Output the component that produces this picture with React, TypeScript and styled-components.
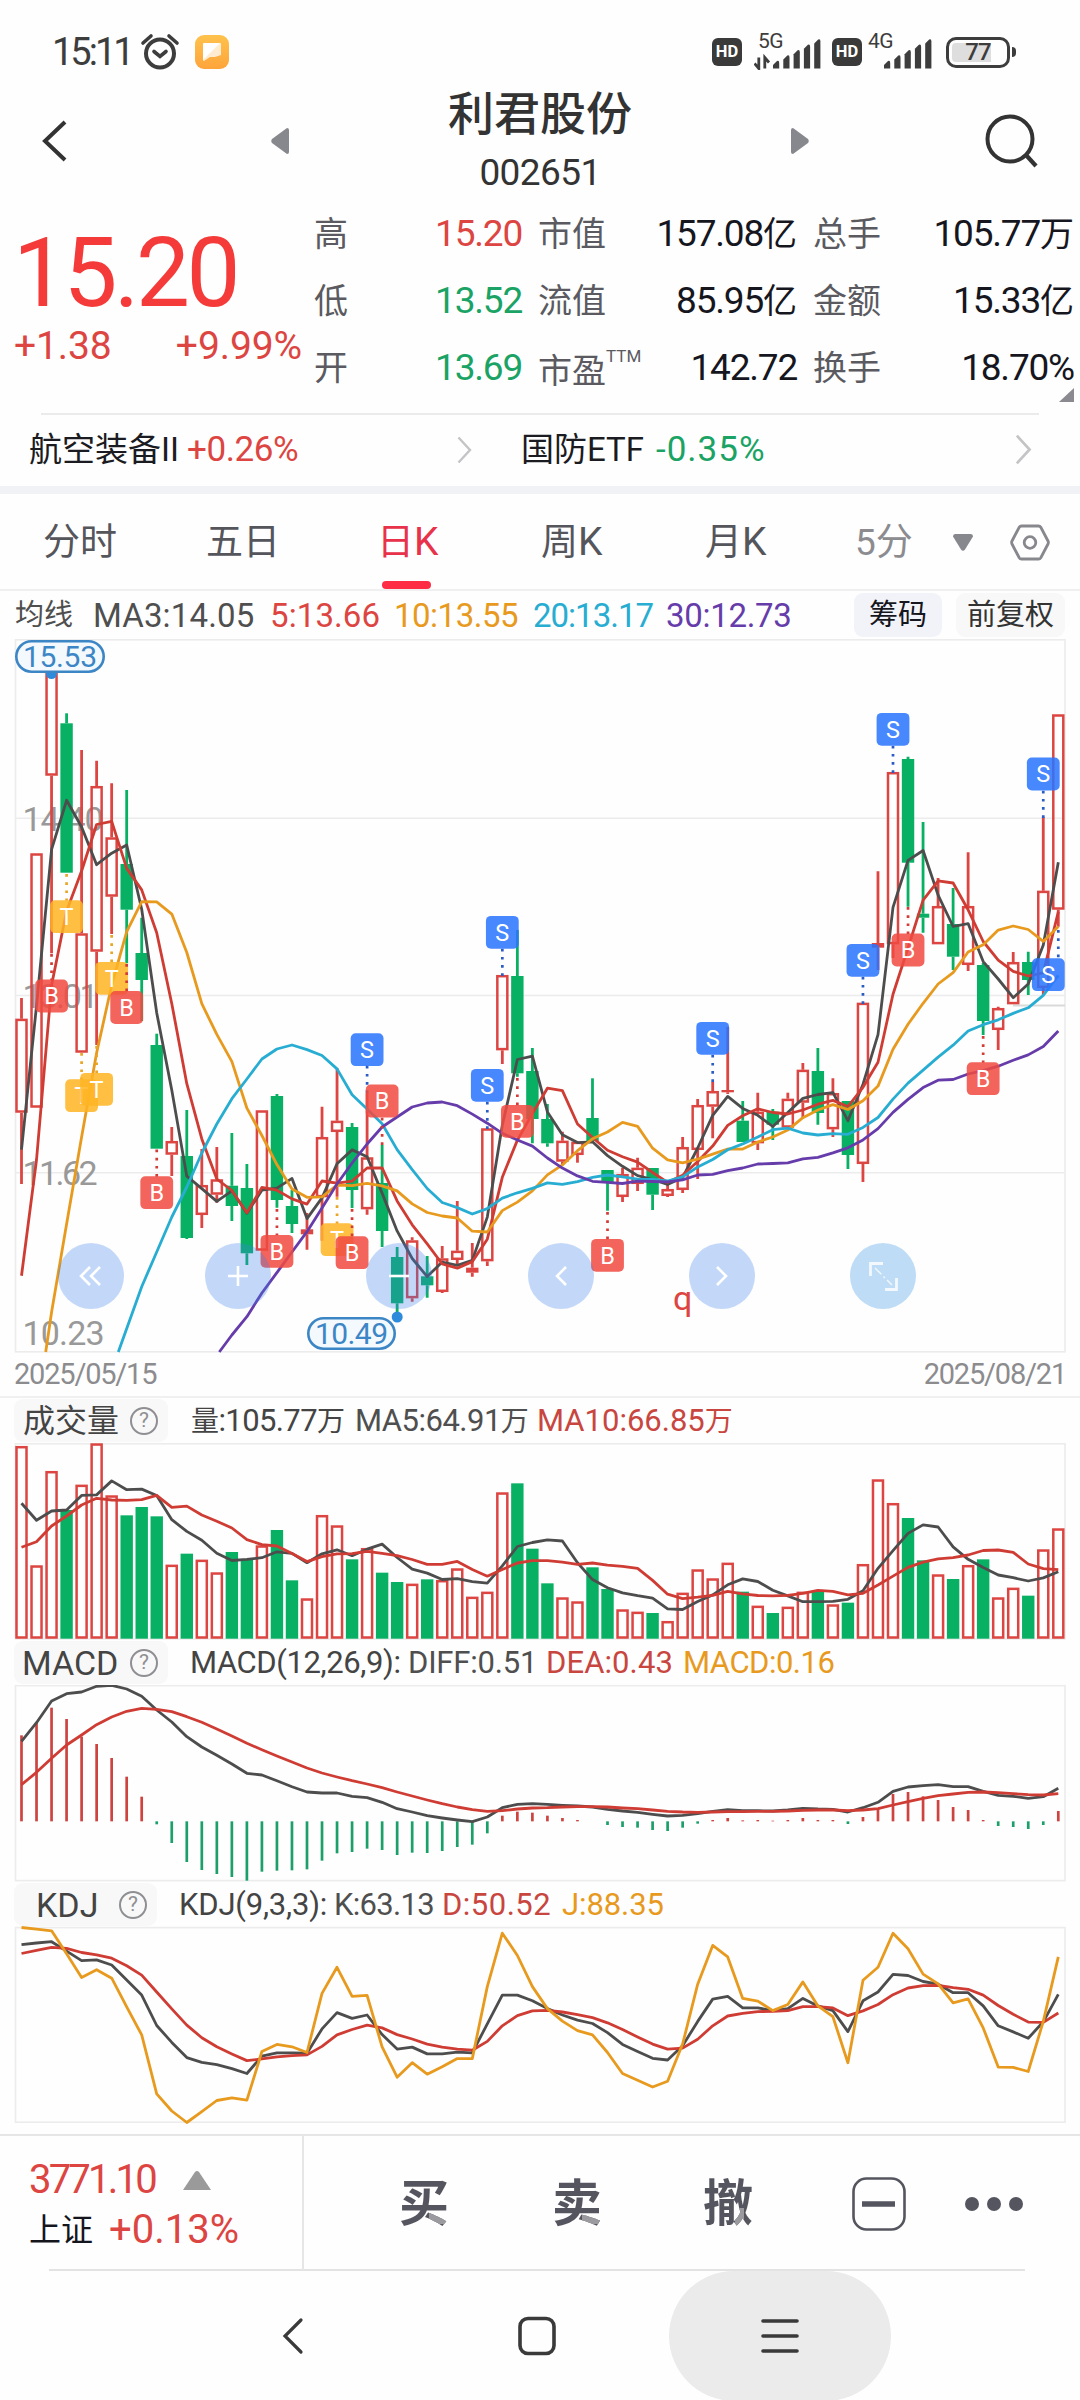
import React from "react";
import styled, { createGlobalStyle } from "styled-components";

const RED = "#dc4541";
const GREEN = "#08b064";
const DARK = "#4d4d4d";
const ORANGE = "#e79a1e";
const CYAN = "#28add2";
const PURPLE = "#663cab";
const LINE_RED = "#cf3c34";
const FRAME = "#ececec";

/* ---------- data ---------- */

const COUNT = 70;
const X0 = 21.5;
const STEP = 15.026;
const xAt = (i: number) => X0 + STEP * i;

// [direction, high, body top, body bottom, low]
type Candle = ["r" | "g", number, number, number, number];
const candles: Candle[] = [
  ["r", 998, 1018.7, 1112.7, 1184], ["r", 853.3, 853.3, 1107.7, 1107.7], ["r", 673, 673, 775.7, 953.3],
  ["g", 713.3, 723.3, 872.7, 872.7], ["r", 750, 933.3, 1052.7, 1052.7], ["r", 760.7, 786, 951.7, 1045],
  ["r", 783.3, 837.3, 896.7, 934], ["g", 790, 864, 909.7, 963.3], ["g", 917.7, 953, 980, 1021],
  ["g", 1033.7, 1045, 1148.7, 1148.7], ["r", 1127, 1141, 1154.7, 1176], ["g", 1110, 1156, 1238, 1239],
  ["r", 1149, 1185, 1215, 1228], ["r", 1147, 1179.3, 1194.7, 1202.7], ["g", 1133, 1185.7, 1206, 1221],
  ["g", 1164, 1188, 1253.3, 1265], ["r", 1110.3, 1110.3, 1250.7, 1250.7], ["g", 1094, 1096, 1200, 1207.7],
  ["g", 1190, 1206, 1224, 1233], ["r", 1213, 1229.3, 1234.3, 1249.7], ["r", 1106.7, 1137, 1197.3, 1240.7],
  ["r", 1068, 1120.7, 1132, 1196.7], ["g", 1123, 1127, 1190, 1208], ["r", 1093, 1157.3, 1209.3, 1214.7],
  ["g", 1145, 1183, 1231, 1247], ["g", 1247, 1257, 1303.3, 1313], ["r", 1237.3, 1240.3, 1298.3, 1301.7],
  ["g", 1256, 1276.3, 1285.3, 1297.7], ["r", 1246, 1258.3, 1292, 1293], ["r", 1201, 1250.7, 1260, 1265],
  ["r", 1243, 1267.7, 1272.7, 1276.7], ["r", 1128.3, 1128.3, 1261.3, 1266], ["r", 975, 975, 1050.3, 1064],
  ["g", 930, 976, 1073.3, 1076.7], ["g", 1048, 1071, 1119, 1143.3], ["g", 1104, 1119, 1143.3, 1146.7],
  ["r", 1131.7, 1140.7, 1161.7, 1165], ["r", 1141.7, 1141.7, 1155, 1162.7], ["g", 1078.3, 1118, 1141, 1141],
  ["g", 1170, 1170, 1183, 1210.7], ["r", 1168, 1174, 1197, 1202], ["r", 1157.7, 1167.7, 1184, 1191],
  ["g", 1168, 1168, 1194.7, 1210], ["r", 1185, 1189, 1196, 1197], ["r", 1137, 1147, 1190, 1193],
  ["r", 1099, 1105, 1150, 1179], ["r", 1081.7, 1091, 1106.7, 1138.3], ["r", 1027, 1090, 1092.3, 1094],
  ["g", 1101, 1120.7, 1142, 1142], ["r", 1092.7, 1111.7, 1143.3, 1150], ["g", 1109, 1111.7, 1124.7, 1140],
  ["r", 1092.7, 1098.7, 1127.7, 1127.7], ["r", 1063, 1069.7, 1102.7, 1118], ["g", 1048, 1071, 1113, 1124.7],
  ["r", 1078.3, 1093, 1129.3, 1137], ["g", 1101, 1101, 1155, 1169], ["r", 1002.7, 1002.7, 1164, 1182],
  ["r", 871.3, 943, 947.7, 970], ["r", 772, 772, 944.3, 958], ["g", 756.7, 759, 862.7, 906.7],
  ["g", 822, 913.7, 917.7, 932.7], ["r", 878, 906, 944.3, 944.3], ["g", 888, 924, 956.7, 970],
  ["r", 852.3, 906, 965, 971], ["g", 963, 965, 1021, 1035], ["r", 1006.7, 1008, 1030, 1050],
  ["r", 952, 962, 1004.3, 1004.3], ["g", 951.7, 962, 980, 995], ["r", 817.3, 890.7, 988, 995],
  ["r", 714.3, 714.3, 909.7, 926.7],
];

const volumeTops = [
  168, 526, 243, 360, 284, 160, 316, 376, 351, 379, 524, 491, 509, 547, 486, 508, 466, 420, 571, 625, 375, 406, 508,
  474, 548, 576, 581, 568, 570, 535, 620, 605, 307, 280, 476, 580, 622, 634, 532, 597, 658, 665, 669, 693, 608, 538,
  565, 518, 605, 647, 669, 650, 605, 603, 643, 638, 522, 268, 339, 384, 511, 553, 567, 525, 508, 622, 593, 617, 478,
  415,
].map((v) => 1390 + v / 3);

const third = (v: number) => 1390 + v / 3;

const macdBars = [
  1036, 998, 953, 987, 1040, 1062, 1104, 1160, 1220, 1303, 1359, 1416, 1440, 1452, 1461, 1472, 1445, 1442, 1441, 1438,
  1412, 1390, 1386, 1376, 1380, 1395, 1388, 1389, 1383, 1371, 1364, 1330, 1277, 1265, 1268, 1277, 1284, 1290, 1294,
  1305, 1311, 1313, 1320, 1323, 1313, 1301, 1290, 1284, 1291, 1290, 1292, 1290, 1284, 1290, 1290, 1302, 1281, 1256,
  1212, 1206, 1219, 1230, 1251, 1260, 1290, 1308, 1311, 1317, 1305, 1263,
].map(third);
const diff = [
  1054, 998, 933, 911, 906, 889, 886, 897, 919, 960, 996, 1040, 1071, 1096, 1122, 1150, 1155, 1172, 1190, 1206, 1209,
  1209, 1219, 1223, 1237, 1256, 1266, 1277, 1284, 1290, 1295, 1281, 1253, 1243, 1241, 1243, 1246, 1248, 1251, 1258,
  1263, 1267, 1273, 1278, 1276, 1271, 1264, 1259, 1262, 1262, 1263, 1260, 1255, 1257, 1258, 1266, 1253, 1237, 1204,
  1191, 1187, 1184, 1190, 1190, 1204, 1216, 1219, 1225, 1220, 1195,
].map(third);
const dea = [
  1184, 1147, 1105, 1065, 1035, 1004, 981, 964, 955, 958, 965, 980, 997, 1017, 1038, 1060, 1079, 1098, 1116, 1134,
  1149, 1161, 1172, 1182, 1193, 1206, 1218, 1230, 1241, 1251, 1259, 1264, 1262, 1257, 1254, 1253, 1251, 1250, 1250,
  1251, 1254, 1256, 1260, 1264, 1266, 1267, 1266, 1265, 1265, 1264, 1264, 1263, 1261, 1260, 1260, 1262, 1260, 1256,
  1245, 1235, 1225, 1217, 1212, 1207, 1206, 1208, 1211, 1214, 1215, 1211,
].map(third);

const kdjY = (v: number) => 1870 + v / 2.9585;
const lineJ = [
  170, 175, 180, 248, 318, 295, 320, 405, 488, 662, 713, 747, 715, 682, 674, 681, 537, 516, 523, 540, 365, 288, 374,
  371, 523, 613, 570, 604, 582, 558, 558, 345, 187, 253, 345, 410, 447, 475, 488, 540, 602, 622, 642, 625, 515, 338,
  223, 257, 380, 388, 416, 398, 331, 402, 434, 570, 326, 288, 187, 233, 308, 337, 393, 381, 467, 583, 584, 596, 448,
  257,
].map(kdjY);
const lineK = [
  221, 216, 212, 240, 268, 266, 281, 325, 370, 460, 510, 555, 569, 576, 588, 602, 551, 541, 541, 542, 470, 422, 439,
  429, 487, 530, 524, 544, 544, 539, 541, 455, 370, 370, 387, 410, 429, 444, 454, 481, 516, 537, 557, 562, 520, 448,
  382, 374, 408, 408, 416, 410, 380, 402, 416, 478, 387, 361, 309, 312, 330, 338, 363, 363, 402, 461, 479, 498, 449,
  368,
].map(kdjY);
const lineD = [
  247, 238, 229, 232, 244, 251, 261, 283, 311, 361, 411, 459, 496, 523, 544, 564, 559, 553, 549, 547, 522, 488, 472,
  459, 467, 487, 500, 515, 524, 530, 533, 507, 461, 431, 417, 415, 420, 428, 437, 452, 472, 494, 515, 530, 527, 501,
  461, 432, 424, 419, 418, 416, 404, 404, 408, 431, 417, 398, 369, 349, 342, 341, 348, 353, 370, 401, 427, 450, 451,
  423,
].map(kdjY);

type Pt = [number, number];
const toPoints = (pts: Pt[]) => pts.map((p) => `${p[0].toFixed(1)},${p[1].toFixed(1)}`).join(" ");
const seriesPts = (ys: number[], from = 0): Pt[] => ys.map((y, k): Pt => [xAt(from + k), y]);

/** Rolling mean of n values; `lead` holds the points before the window is full. */
function average(values: number[], n: number, lead: Pt[]): Pt[] {
  const out = [...lead];
  for (let i = n - 1; i < COUNT; i++) {
    let sum = 0;
    for (let k = 0; k < n; k++) sum += values[i - k];
    out.push([xAt(i), sum / n]);
  }
  return out;
}

const closes = candles.map(([dir, , top, bottom]) =>
  bottom - top < 5.2 ? (top + bottom) / 2 : dir === "r" ? top + 1 : bottom
);

const ma3 = average(closes, 3, seriesPts([1149.7, 1006]));
const ma5 = average(closes, 5, seriesPts([1275.7, 1160, 985, 911]));
const ma10 = average(closes, 10, [[45.7, 1352], ...seriesPts([1312, 1224, 1137, 1053, 985, 931.7, 901.7], 2)]);
const ma20 = average(closes, 20, [
  [118.3, 1352],
  ...seriesPts([1286.7, 1252, 1217, 1187, 1153, 1124, 1098.7, 1079, 1059, 1049, 1045], 8),
]);
const ma30 = average(closes, 30, [
  [219.3, 1352],
  ...seriesPts([1335, 1316.7, 1293, 1272.7, 1252, 1231.7, 1208, 1184, 1163, 1144, 1127, 1117, 1107, 1103, 1102], 14),
]);
const volMa5 = average(volumeTops, 5, seriesPts([340, 391, 363, 360].map(third)));
const volMa10 = average(volumeTops, 10, seriesPts([472, 455, 408, 378, 345, 325, 330, 331, 329].map(third)));

type Mark = { k: "B" | "S" | "T"; i: number; y: number; to: number; x?: number };
const marks: Mark[] = [
  { k: "T", i: 3, y: 916.7, to: 874 },
  { k: "B", i: 2, y: 996, to: 954 },
  { k: "T", i: 6, y: 978.3, to: 935 },
  { k: "B", i: 7, y: 1007.5, to: 964 },
  { k: "T", i: 4, y: 1095.7, to: 1053 },
  { k: "T", i: 5, y: 1089.3, to: 1046 },
  { k: "B", i: 9, y: 1192.7, to: 1149.5 },
  { k: "B", i: 17, y: 1251.3, to: 1209 },
  { k: "T", i: 21, y: 1239.7, to: 1197 },
  { k: "B", i: 22, y: 1252.7, to: 1209 },
  { k: "S", i: 23, y: 1049.7, to: 1093 },
  { k: "B", i: 24, y: 1101, to: 1145 },
  { k: "S", i: 31, y: 1085.3, to: 1129 },
  { k: "S", i: 32, y: 932.3, to: 976 },
  { k: "B", i: 33, y: 1121.3, to: 1078 },
  { k: "B", i: 39, y: 1255.3, to: 1212 },
  { k: "S", i: 46, y: 1038.3, to: 1082 },
  { k: "S", i: 56, y: 960.3, to: 1004 },
  { k: "S", i: 58, y: 729.3, to: 773 },
  { k: "B", i: 59, y: 950, to: 907 },
  { k: "B", i: 64, y: 1078.7, to: 1036 },
  { k: "S", i: 68, y: 774, to: 818 },
  { k: "S", i: 69, y: 974.7, to: 930, x: 1048.3 },
];
const markFill = { B: "#f04a41", S: "#2a74ff", T: "#ffb424" };
const markDash = { B: "#d23c36", S: "#2b5cc4", T: "#e9a526" };

/* ---------- styles ---------- */

const Global = createGlobalStyle`
  * { box-sizing: border-box; }
  body { margin: 0; background: #fefefe; }
`;

const Screen = styled.div`
  width: 1080px;
  height: 2400px;
  overflow: hidden;
  display: flex;
  flex-direction: column;
  background: #fefefe;
  color: #4a4a4e;
  font-family: Roboto, "Noto Sans CJK SC", sans-serif;
  font-size: 34px;
  line-height: 1;
  svg { display: block; flex: none; }
  svg text { font-family: Roboto, "Noto Sans CJK SC", sans-serif; }
`;

const StatusBar = styled.div`
  height: 84px;
  padding: 20px 64px 0 52px;
  display: flex;
  align-items: center;
  color: #3d3d3d;
`;
const Clock = styled.span`
  width: 88px;
  font-size: 38px;
  letter-spacing: -3px;
`;
const Spring = styled.div`
  flex: 1;
`;
const NoteBadge = styled.div`
  width: 34px;
  height: 34px;
  margin-left: 15px;
  border-radius: 9px;
  background: linear-gradient(#ffc24d, #fda43a);
  display: flex;
  align-items: center;
  justify-content: center;
`;
const HdBadge = styled.div<{ $ml?: number }>`
  width: 30px;
  height: 28px;
  margin-left: ${(p) => p.$ml ?? 0}px;
  border-radius: 6px;
  background: #3a3a3a;
  color: #fff;
  font-size: 16.5px;
  font-weight: 700;
  display: flex;
  align-items: center;
  justify-content: center;
`;
const NetLabel = styled.span<{ $ml: number; $shift: number; $after: number }>`
  align-self: flex-start;
  width: 0;
  margin: 11px ${(p) => p.$after}px 0 ${(p) => p.$ml}px;
  text-indent: ${(p) => p.$shift}px;
  font-size: 21px;
  letter-spacing: -0.5px;
  white-space: nowrap;
`;
const Battery = styled.div`
  width: 64px;
  height: 31px;
  margin-left: 14px;
  padding: 3px;
  border: 3px solid #3d3d3d;
  border-radius: 10px;
  background: linear-gradient(90deg, #dedede 39px, transparent 39px) content-box;
  background-origin: content-box;
  font-size: 24px;
  font-weight: 500;
  letter-spacing: -1px;
  display: flex;
  align-items: center;
  justify-content: center;
`;
const BatteryTip = styled.div`
  width: 4px;
  height: 10px;
  margin-left: 2px;
  border-radius: 0 4px 4px 0;
  background: #3d3d3d;
`;

const Header = styled.header`
  height: 116px;
  padding: 0 40px 3px;
  display: flex;
  align-items: center;
  justify-content: space-between;
  color: #333;
`;
const BackSlot = styled.div`
  width: 56px;
`;
const TitleNav = styled.div`
  width: 538px;
  display: flex;
  align-items: center;
  justify-content: space-between;
`;
const TitleBlock = styled.div`
  display: flex;
  flex-direction: column;
  align-items: center;
  gap: 17px;
`;
const Title = styled.h1`
  margin: 0;
  font-size: 46px;
  font-weight: 500;
`;
const Code = styled.span`
  font-size: 37px;
  letter-spacing: -0.6px;
`;

const Quote = styled.section`
  height: 213px;
  padding: 0 6px 0 13px;
  display: flex;
`;
const PriceBlock = styled.div`
  width: 301px;
  padding-top: 25px;
  color: ${RED};
`;
const Price = styled.div`
  height: 96px;
  line-height: 96px;
  font-size: 96px;
  letter-spacing: -3.4px;
  color: #f43b3a;
`;
const Changes = styled.div`
  display: flex;
  justify-content: space-between;
  margin-top: 6px;
  padding: 0 12px 0 1px;
  font-size: 39px;
  letter-spacing: -0.1px;
`;
const Stats = styled.div`
  flex: 1;
  position: relative;
  display: grid;
  grid-template-columns: 208px 259px 1fr;
  grid-template-rows: repeat(3, 67px);
  column-gap: 16px;
`;
const Stat = styled.div`
  display: flex;
  align-items: center;
  justify-content: space-between;
`;
const StatLabel = styled.span`
  color: #5a5a60;
  font-size: 34px;
`;
const Ttm = styled.sup`
  display: inline-block;
  width: 34px;
  font-size: 17px;
  line-height: 1;
  vertical-align: 21px;
`;
const StatValue = styled.span<{ $c?: string }>`
  color: ${(p) => p.$c ?? "#16161e"};
  font-size: 37px;
  letter-spacing: -1.2px;
  white-space: nowrap;
`;
const Cjk = styled.span`
  font-size: 34px;
  letter-spacing: 0;
`;
const CornerMark = styled.svg`
  position: absolute;
  right: 0;
  bottom: 11px;
`;

const Sectors = styled.section`
  height: 73px;
  margin: 0 41px 0 29px;
  display: flex;
  align-items: center;
  color: #1b1b22;
  background: linear-gradient(#ebebeb, #ebebeb) 12px 0 / 100% 2px no-repeat;
`;
const Sector = styled.div<{ $w: number }>`
  width: ${(p) => p.$w}px;
  display: flex;
  align-items: center;
  font-size: 33px;
`;
const SectorChange = styled.span<{ $c: string; $ml: number; $ls: number }>`
  flex: 1;
  margin-left: ${(p) => p.$ml}px;
  color: ${(p) => p.$c};
  font-size: 35px;
  letter-spacing: ${(p) => p.$ls}px;
`;
const Band = styled.div`
  height: 8px;
  background: #f1f2f6;
`;

const Tabs = styled.nav`
  height: 97px;
  padding: 2px 30px 0 43px;
  display: flex;
  align-items: center;
  border-bottom: 2px solid #f0f0f0;
  color: #55555c;
`;
const Tab = styled.div<{ $w: number; $on?: boolean; $dim?: boolean }>`
  width: ${(p) => p.$w}px;
  height: 93px;
  display: flex;
  align-items: center;
  position: relative;
  font-size: 37px;
  color: ${(p) => (p.$on ? "#e8324a" : p.$dim ? "#8b8b90" : "inherit")};
  &::after {
    content: "";
    display: ${(p) => (p.$on ? "block" : "none")};
    position: absolute;
    left: 5px;
    bottom: 0;
    width: 49px;
    height: 8px;
    border-radius: 4px;
    background: #ff2c45;
  }
`;
const Latin = styled.span`
  font-size: 39px;
`;

const Legend = styled.div`
  height: 48px;
  padding: 0 15px 0 15px;
  display: flex;
  align-items: center;
  font-size: 33px;
`;
const LegendItem = styled.span<{ $w: number; $c?: string; $ls?: number; $size?: number }>`
  width: ${(p) => p.$w}px;
  color: ${(p) => p.$c ?? "#4f4f4f"};
  font-size: ${(p) => p.$size ?? 33}px;
  letter-spacing: ${(p) => p.$ls ?? -0.7}px;
  white-space: nowrap;
`;
const Chip = styled.button<{ $w: number; $soft?: boolean }>`
  width: ${(p) => p.$w}px;
  height: 44px;
  margin-left: ${(p) => (p.$soft ? 14 : 0)}px;
  padding: 0;
  border: 0;
  border-radius: 9px;
  background: ${(p) => (p.$soft ? "#f8f8f8" : "#f2f3f9")};
  color: ${(p) => (p.$soft ? "#333" : "#16161e")};
  font: inherit;
  font-size: 29px;
`;

const ChartArea = styled.div`
  position: relative;
  height: 714px;
`;
const RoundButton = styled.button<{ $x: number; $alt?: boolean }>`
  position: absolute;
  left: ${(p) => p.$x - 33}px;
  top: 604px;
  width: 66px;
  height: 66px;
  padding: 0;
  border: 0;
  border-radius: 50%;
  background: ${(p) => (p.$alt ? "rgba(42, 142, 227, 0.3)" : "rgba(60, 130, 235, 0.3)")};
  display: flex;
  align-items: center;
  justify-content: center;
`;
const Dates = styled.div`
  height: 45px;
  padding: 0 14px;
  display: flex;
  align-items: center;
  justify-content: space-between;
  border-bottom: 2px solid #f0f0f0;
  color: #8c8c8f;
  font-size: 29px;
  letter-spacing: -1.2px;
`;

const PanelHead = styled.div<{ $h: number }>`
  height: ${(p) => p.$h}px;
  padding-left: 14px;
  display: flex;
  align-items: center;
`;
const PanelName = styled.div<{ $w: number; $pl: number; $size: number }>`
  width: ${(p) => p.$w}px;
  height: 43px;
  padding: 0 10px 0 ${(p) => p.$pl}px;
  display: flex;
  align-items: center;
  justify-content: space-between;
  border-radius: 9px;
  background: #f8f8f8;
  color: #444;
  font-size: ${(p) => p.$size}px;
`;
const Help = styled.span`
  width: 28px;
  height: 28px;
  border: 2px solid #8f8f93;
  border-radius: 50%;
  color: #8f8f93;
  font-size: 21px;
  display: flex;
  align-items: center;
  justify-content: center;
`;
const PanelLegend = styled.div<{ $ml: number }>`
  margin-left: ${(p) => p.$ml}px;
  display: flex;
  align-items: baseline;
`;
const Small = styled.span`
  font-size: 28px;
`;

const Footer = styled.footer`
  height: 137px;
  border-top: 2px solid #e6e6e6;
  display: flex;
  color: #55555f;
  background: linear-gradient(#e3e3e3, #e3e3e3) 49px 100% / 976px 2px no-repeat;
`;
const IndexBox = styled.div`
  width: 304px;
  height: 134px;
  padding: 24px 0 0 29px;
  border-right: 2px solid #e6e6e6;
  display: flex;
  flex-direction: column;
  gap: 10px;
`;
const IndexRow = styled.div<{ $ls: number }>`
  height: 40px;
  display: flex;
  align-items: center;
  color: ${RED};
  font-size: 40px;
  letter-spacing: ${(p) => p.$ls}px;
`;
const IndexName = styled.span`
  width: 80px;
  color: #15151d;
  font-size: 32px;
  letter-spacing: 0;
`;
const Actions = styled.div`
  flex: 1;
  padding-left: 95px;
  display: flex;
  align-items: center;
`;
const Action = styled.div<{ $w: number }>`
  width: ${(p) => p.$w}px;
`;
const TradeGlyph = styled.span<{ $gx: string; $gw: string; $gh: string }>`
  display: block;
  width: 50px;
  font-size: 50px;
  line-height: 52px;
  font-weight: 700;
  color: transparent;
  background:
    linear-gradient(#9a9a9f, #9a9a9f) ${(p) => `${p.$gx} 88% / ${p.$gw} ${p.$gh}`} no-repeat,
    linear-gradient(#55555f, #55555f);
  -webkit-background-clip: text;
  background-clip: text;
`;

const SystemNav = styled.div`
  height: 129px;
  padding: 0 189px 0 282px;
  display: flex;
  align-items: center;
`;
const NavPill = styled.div`
  width: 222px;
  height: 130px;
  margin-left: 113px;
  border-radius: 65px;
  background: #ebebeb;
  display: flex;
  align-items: center;
  justify-content: center;
`;

/* ---------- pieces ---------- */

const Line = ({ pts, color }: { pts: Pt[]; color: string }) => (
  <polyline points={toPoints(pts)} fill="none" stroke={color} strokeWidth={2.8} strokeLinejoin="round" />
);

const Signal = ({ arrows }: { arrows?: boolean }) => (
  <svg width={arrows ? 67 : 48} height="36" viewBox={arrows ? "-19 0 67 36" : "0 0 48 36"}>
    {[0, 1, 2, 3, 4].map((n) => {
      const x = n * 10.3;
      const top = 29 - n * 5.4;
      return (
        <path
          key={n}
          d={`M${x} ${top + 2}L${x + 4} ${top - 2}Q${x + 6.2} ${top - 3} ${x + 6.2} ${top}V34.5H${x}Z`}
          fill="#3d3d3d"
        />
      );
    })}
    {arrows && (
      <>
        <path d="M-14.2 23.5V34.5L-18.5 29.5M-8.2 34.5V23.5L-4 28.5" stroke="#3d3d3d" strokeWidth="2.8" fill="none" />
      </>
    )}
  </svg>
);

const Chevron = ({ color = "#c4c4c6", w = 15, h = 28 }: { color?: string; w?: number; h?: number }) => (
  <svg width={w} height={h} viewBox="0 0 15 28">
    <path d="M1.5 1.5L13 14L1.5 26.5" fill="none" stroke={color} strokeWidth="2.4" />
  </svg>
);

const PriceTag = ({ x, y, w, label }: { x: number; y: number; w: number; label: string }) => (
  <g>
    <rect x={x + 1.3} y={y + 1.3} width={w - 2.6} height={30.4} rx={15.2} fill="#f3f9fc" stroke="#3c86c6" strokeWidth="2.6" />
    <text x={x + 8} y={y + 27.3} fontSize="30" textLength={w - 16} fill="#3c86c6">
      {label}
    </text>
  </g>
);

const CandleChart = () => (
  <svg width="1080" height="714" viewBox="0 639 1080 714">
    <g stroke={FRAME} strokeWidth="1.6" fill="none">
      <rect x="15.5" y="639.8" width="1049.5" height="712" />
      <path d="M15.5 818.3H1065M15.5 995.5H1065M15.5 1172.7H1065" />
    </g>
    <g fill="#999" fontSize="34">
      <text x="22.5" y="830.7" textLength="81">14.40</text>
      <text x="22.5" y="1007.5" textLength="76">13.01</text>
      <text x="22.5" y="1185" textLength="75">11.62</text>
      <text x="22.5" y="1344.5" textLength="82">10.23</text>
    </g>
    <path d="M1013 1005.5H1065" stroke="#d9d9d9" strokeWidth="2.2" />
    {candles.map(([dir, high, top, bottom, low], i) => {
      const x = xAt(i);
      const color = dir === "r" ? RED : GREEN;
      const solid = dir === "g" || bottom - top < 5.5;
      return (
        <g key={i}>
          <path d={`M${x} ${high}V${top}M${x} ${bottom}V${low}`} stroke={color} strokeWidth="2.8" />
          {solid ? (
            <rect x={x - 6.2} y={top} width={12.4} height={bottom - top} fill={color} />
          ) : (
            <rect x={x - 5} y={top + 1.2} width={10} height={bottom - top - 2.4} fill="none" stroke={color} strokeWidth="2.5" />
          )}
        </g>
      );
    })}
    <Line pts={ma3} color={DARK} />
    <Line pts={ma5} color={LINE_RED} />
    <Line pts={ma10} color={ORANGE} />
    <Line pts={ma20} color={CYAN} />
    <Line pts={ma30} color={PURPLE} />
    {marks.map(({ k, i, y, to, x: bx }, n) => {
      const x = xAt(i);
      const cx = bx ?? x;
      const edge = to > y ? y + 16 : y - 16;
      return (
        <g key={n}>
          <path d={`M${x} ${to}V${edge}`} stroke={markDash[k]} strokeWidth="2.7" strokeDasharray="2.7 5.5" />
          <rect x={cx - 16.4} y={y - 16.4} width="32.8" height="32.8" rx="5" fill={markFill[k]} opacity="0.86" />
          <text x={cx} y={y + 8.2} fontSize="23.5" textAnchor="middle" fill="#fff">
            {k}
          </text>
        </g>
      );
    })}
    <circle cx="51.5" cy="673.5" r="5.5" fill="#2e8bdc" />
    <PriceTag x={15} y={640} w={90} label="15.53" />
    <PriceTag x={307} y={1317} w={89} label="10.49" />
    <circle cx="397.2" cy="1317" r="5.5" fill="#2e8bdc" />
    <text x="673" y="1309.5" fontSize="34" fill={RED}>
      q
    </text>
  </svg>
);

const VolumeChart = () => (
  <svg width="1080" height="197" viewBox="0 1443 1080 197">
    <rect x="15.5" y="1443.8" width="1049.5" height="195.2" stroke={FRAME} strokeWidth="1.6" fill="none" />
    {volumeTops.map((y, i) => {
      const x = xAt(i);
      return candles[i][0] === "g" ? (
        <rect key={i} x={x - 6.2} y={y} width="12.4" height={1638.7 - y} fill={GREEN} />
      ) : (
        <rect key={i} x={x - 5} y={y + 1.2} width="10" height={1636.3 - y} fill="none" stroke={RED} strokeWidth="2.5" />
      );
    })}
    <Line pts={volMa5} color={DARK} />
    <Line pts={volMa10} color={LINE_RED} />
  </svg>
);

const ZERO = third(1294);
const MacdChart = () => (
  <svg width="1080" height="197" viewBox="0 1685 1080 197">
    <rect x="15.5" y="1685.6" width="1049.5" height="195" stroke={FRAME} strokeWidth="1.6" fill="none" />
    {macdBars.map((y, i) => (
      <path key={i} d={`M${xAt(i)} ${ZERO}V${y}`} stroke={y < ZERO ? "#cd4340" : "#1c9f68"} strokeWidth="2.7" />
    ))}
    <Line pts={seriesPts(diff)} color={DARK} />
    <Line pts={seriesPts(dea)} color={LINE_RED} />
  </svg>
);

const KdjChart = () => (
  <svg width="1080" height="207" viewBox="0 1927 1080 207" overflow="visible">
    <rect x="15.5" y="1927.6" width="1049.5" height="194.6" stroke={FRAME} strokeWidth="1.6" fill="none" />
    <Line pts={seriesPts(lineK)} color={DARK} />
    <Line pts={seriesPts(lineD)} color={LINE_RED} />
    <Line pts={seriesPts(lineJ)} color={ORANGE} />
  </svg>
);

const ButtonIcon = ({ d }: { d: string }) => (
  <svg width="34" height="34" viewBox="-17 -17 34 34">
    <path d={d} fill="none" stroke="#fff" strokeWidth="2.6" />
  </svg>
);

/* ---------- page ---------- */

export default function App() {
  return (
    <Screen>
      <Global />
      <StatusBar>
        <Clock>15:11</Clock>
        <svg width="40" height="38" viewBox="0 0 40 38">
          <circle cx="20" cy="20.5" r="14" fill="none" stroke="#3d3d3d" strokeWidth="4" />
          <path d="M3 10L11 3M37 10L29 3" stroke="#3d3d3d" strokeWidth="3.6" strokeLinecap="round" />
          <path d="M14 18.5L20 23.5L26 18.5" fill="none" stroke="#3d3d3d" strokeWidth="3.6" strokeLinecap="round" />
        </svg>
        <NoteBadge>
          <svg width="20" height="20" viewBox="0 0 20 20">
            <path d="M2 1H18Q19 1 19 2V13L13 15H8L2 19Q1 19 1 18V2Q1 1 2 1Z" fill="#fff" opacity="0.75" />
            <path d="M2 1H18L1 18V2Z" fill="#fff" />
          </svg>
        </NoteBadge>
        <Spring />
        <HdBadge>HD</HdBadge>
        <NetLabel $ml={12} $shift={4} $after={0}>5G</NetLabel>
        <Signal arrows />
        <HdBadge $ml={11}>HD</HdBadge>
        <NetLabel $ml={6} $shift={0} $after={16}>4G</NetLabel>
        <Signal />
        <Battery>77</Battery>
        <BatteryTip />
      </StatusBar>

      <Header>
        <BackSlot>
          <svg width="28" height="44" viewBox="0 0 28 44">
            <path d="M25 3L5 22L25 41" fill="none" stroke="#333" strokeWidth="4" />
          </svg>
        </BackSlot>
        <TitleNav>
          <svg width="18" height="26" viewBox="0 0 18 26">
            <path d="M16 0Q18 0 18 2V24Q18 26 16 26L1 15Q-0.5 13 1 11Z" fill="#87878e" />
          </svg>
          <TitleBlock>
            <Title>利君股份</Title>
            <Code>002651</Code>
          </TitleBlock>
          <svg width="18" height="26" viewBox="0 0 18 26">
            <path d="M2 0Q0 0 0 2V24Q0 26 2 26L17 15Q18.5 13 17 11Z" fill="#87878e" />
          </svg>
        </TitleNav>
        <svg width="56" height="54" viewBox="0 0 56 54">
          <circle cx="26" cy="25" r="22.5" fill="none" stroke="#333" strokeWidth="4" />
          <path d="M42 41L52 52" stroke="#333" strokeWidth="4.2" />
        </svg>
      </Header>

      <Quote>
        <PriceBlock>
          <Price>15.20</Price>
          <Changes>
            <span>+1.38</span>
            <span>+9.99%</span>
          </Changes>
        </PriceBlock>
        <Stats>
          <Stat>
            <StatLabel>高</StatLabel>
            <StatValue $c={RED}>15.20</StatValue>
          </Stat>
          <Stat>
            <StatLabel>市值</StatLabel>
            <StatValue>
              157.08<Cjk>亿</Cjk>
            </StatValue>
          </Stat>
          <Stat>
            <StatLabel>总手</StatLabel>
            <StatValue>
              105.77<Cjk>万</Cjk>
            </StatValue>
          </Stat>
          <Stat>
            <StatLabel>低</StatLabel>
            <StatValue $c="#1aa364">13.52</StatValue>
          </Stat>
          <Stat>
            <StatLabel>流值</StatLabel>
            <StatValue>
              85.95<Cjk>亿</Cjk>
            </StatValue>
          </Stat>
          <Stat>
            <StatLabel>金额</StatLabel>
            <StatValue>
              15.33<Cjk>亿</Cjk>
            </StatValue>
          </Stat>
          <Stat>
            <StatLabel>开</StatLabel>
            <StatValue $c="#1aa364">13.69</StatValue>
          </Stat>
          <Stat>
            <StatLabel>
              市盈<Ttm>TTM</Ttm>
            </StatLabel>
            <StatValue>142.72</StatValue>
          </Stat>
          <Stat>
            <StatLabel>换手</StatLabel>
            <StatValue>18.70%</StatValue>
          </Stat>
          <CornerMark width="15" height="14" viewBox="0 0 15 14">
            <path d="M15 0V14H0Z" fill="#8a8a90" />
          </CornerMark>
        </Stats>
      </Quote>

      <Sectors>
        <Sector $w={443}>
          航空装备II<SectorChange $c={RED} $ml={8} $ls={-0.4}>+0.26%</SectorChange>
          <Chevron />
        </Sector>
        <Sector $w={49} />
        <Sector $w={511}>
          国防ETF<SectorChange $c="#1aa364" $ml={12} $ls={1}>-0.35%</SectorChange>
          <Chevron w={17} h={31} />
        </Sector>
      </Sectors>
      <Band />

      <Tabs>
        <Tab $w={163}>分时</Tab>
        <Tab $w={171}>五日</Tab>
        <Tab $w={164} $on>日<Latin>K</Latin></Tab>
        <Tab $w={164}>周<Latin>K</Latin></Tab>
        <Tab $w={150}>月<Latin>K</Latin></Tab>
        <Tab $w={98} $dim>5分</Tab>
        <svg width="20" height="17" viewBox="0 0 20 17">
          <path d="M2 0H18Q20 0 20 2.5L12 15.5Q10 18 8 15.5L0 2.5Q0 0 2 0Z" fill="#87878e" />
        </svg>
        <Spring />
        <svg width="40" height="37" viewBox="0 0 40 37">
          <path
            d="M11.5 2H28.5Q30 2 30.8 3.3L38 17Q38.8 18.5 38 20L30.8 33.7Q30 35 28.5 35H11.5Q10 35 9.2 33.7L2 20Q1.2 18.5 2 17L9.2 3.3Q10 2 11.5 2Z"
            fill="none"
            stroke="#87878e"
            strokeWidth="2.8"
          />
          <circle cx="20" cy="18.5" r="5.8" fill="none" stroke="#87878e" strokeWidth="2.8" />
        </svg>
      </Tabs>

      <Legend>
        <LegendItem $w={78} $size={29} $ls={0}>均线</LegendItem>
        <LegendItem $w={177} $ls={0.15}>MA3:14.05</LegendItem>
        <LegendItem $w={124} $c={RED} $ls={0.1}>5:13.66</LegendItem>
        <LegendItem $w={139} $c={ORANGE} $ls={-0.5}>10:13.55</LegendItem>
        <LegendItem $w={133} $c={CYAN} $ls={-1}>20:13.17</LegendItem>
        <LegendItem $w={188} $c={PURPLE} $ls={-0.3}>30:12.73</LegendItem>
        <Chip $w={88}>筹码</Chip>
        <Chip $w={109} $soft>前复权</Chip>
      </Legend>

      <ChartArea>
        <CandleChart />
        <RoundButton $x={91.3}>
          <ButtonIcon d="M-1 -9L-10 0L-1 9M9 -9L0 0L9 9" />
        </RoundButton>
        <RoundButton $x={238}>
          <ButtonIcon d="M-10 0H10M0 -10V10" />
        </RoundButton>
        <RoundButton $x={399.3}>
          <ButtonIcon d="M-10 0H10" />
        </RoundButton>
        <RoundButton $x={561}>
          <ButtonIcon d="M5 -9L-4 0L5 9" />
        </RoundButton>
        <RoundButton $x={722}>
          <ButtonIcon d="M-5 -9L4 0L-5 9" />
        </RoundButton>
        <RoundButton $x={883} $alt>
          <svg width="34" height="34" viewBox="-17 -17 34 34" fill="none" stroke="#f2f8fd">
            <path d="M-12.5 0V-12.5H0M2 13.5H13.5V2" strokeWidth="2.8" />
            <path d="M-8 -8L9 9" strokeWidth="1.4" strokeDasharray="9 3 2 3" />
          </svg>
        </RoundButton>
      </ChartArea>
      <Dates>
        <span>2025/05/15</span>
        <span>2025/08/21</span>
      </Dates>

      <PanelHead $h={45}>
        <PanelName $w={154} $pl={9} $size={32}>
          成交量<Help>?</Help>
        </PanelName>
        <PanelLegend $ml={23}>
          <LegendItem $w={164} $size={31} $ls={-0.6} $c="#444">
            <Small>量</Small>:105.77<Small>万</Small>
          </LegendItem>
          <LegendItem $w={182} $size={31} $ls={-0.5}>
            MA5:64.91<Small>万</Small>
          </LegendItem>
          <LegendItem $w={200} $size={31} $ls={0} $c="#c8463f">
            MA10:66.85<Small>万</Small>
          </LegendItem>
        </PanelLegend>
      </PanelHead>
      <VolumeChart />

      <PanelHead $h={45}>
        <PanelName $w={154} $pl={8} $size={34}>
          MACD<Help>?</Help>
        </PanelName>
        <PanelLegend $ml={22}>
          <LegendItem $w={218} $size={31} $ls={-0.4} $c="#444">MACD(12,26,9):</LegendItem>
          <LegendItem $w={138} $size={31} $ls={-0.2}>DIFF:0.51</LegendItem>
          <LegendItem $w={137} $size={31} $ls={0.1} $c="#c8463f">DEA:0.43</LegendItem>
          <LegendItem $w={160} $size={31} $ls={-0.5} $c={ORANGE}>MACD:0.16</LegendItem>
        </PanelLegend>
      </PanelHead>
      <MacdChart />

      <PanelHead $h={45}>
        <PanelName $w={143} $pl={22} $size={34}>
          KDJ<Help>?</Help>
        </PanelName>
        <PanelLegend $ml={22}>
          <LegendItem $w={155} $size={31} $ls={-0.2} $c="#444">KDJ(9,3,3):</LegendItem>
          <LegendItem $w={108} $size={31} $ls={-0.7}>K:63.13</LegendItem>
          <LegendItem $w={120} $size={31} $ls={0.5} $c="#c8463f">D:50.52</LegendItem>
          <LegendItem $w={110} $size={31} $ls={-0.1} $c={ORANGE}>J:88.35</LegendItem>
        </PanelLegend>
      </PanelHead>
      <KdjChart />

      <Footer>
        <IndexBox>
          <IndexRow $ls={-2.8}>
            3771.10
            <svg width="56" height="19" viewBox="-28 0 56 19">
              <path d="M0 19L12 1Q14 -1 16 1L28 19Z" fill="#9a9a9a" />
            </svg>
          </IndexRow>
          <IndexRow $ls={0}>
            <IndexName>上证</IndexName>+0.13%
          </IndexRow>
        </IndexBox>
        <Actions>
          <Action $w={153}>
            <TradeGlyph $gx="100%" $gw="40%" $gh="24%">买</TradeGlyph>
          </Action>
          <Action $w={151}>
            <TradeGlyph $gx="100%" $gw="40%" $gh="20%">卖</TradeGlyph>
          </Action>
          <Action $w={149}>
            <TradeGlyph $gx="78%" $gw="18%" $gh="34%">撤</TradeGlyph>
          </Action>
          <Action $w={112}>
            <svg width="54" height="54" viewBox="0 0 54 54">
              <rect x="1.5" y="1.5" width="51" height="51" rx="13" fill="none" stroke="#55555f" strokeWidth="2.6" />
              <path d="M10 27H43" stroke="#55555f" strokeWidth="5.6" />
            </svg>
          </Action>
          <svg width="60" height="16" viewBox="0 0 60 16" fill="#55555f">
            <circle cx="8" cy="8" r="7" />
            <circle cx="30" cy="8" r="7" />
            <circle cx="52" cy="8" r="7" />
          </svg>
        </Actions>
      </Footer>

      <SystemNav>
        <svg width="22" height="38" viewBox="0 0 22 38">
          <path d="M19 3L3 19L19 35" fill="none" stroke="#3a3a3a" strokeWidth="3.2" strokeLinecap="round" />
        </svg>
        <Spring />
        <svg width="38" height="40" viewBox="0 0 38 40">
          <rect x="2" y="2.5" width="34" height="35" rx="8" fill="none" stroke="#3a3a3a" strokeWidth="3.6" />
        </svg>
        <NavPill>
          <svg width="38" height="34" viewBox="0 0 38 34">
            <path d="M2 2H36M2 17H36M2 32H36" stroke="#3a3a3a" strokeWidth="3.6" strokeLinecap="round" />
          </svg>
        </NavPill>
      </SystemNav>
    </Screen>
  );
}
